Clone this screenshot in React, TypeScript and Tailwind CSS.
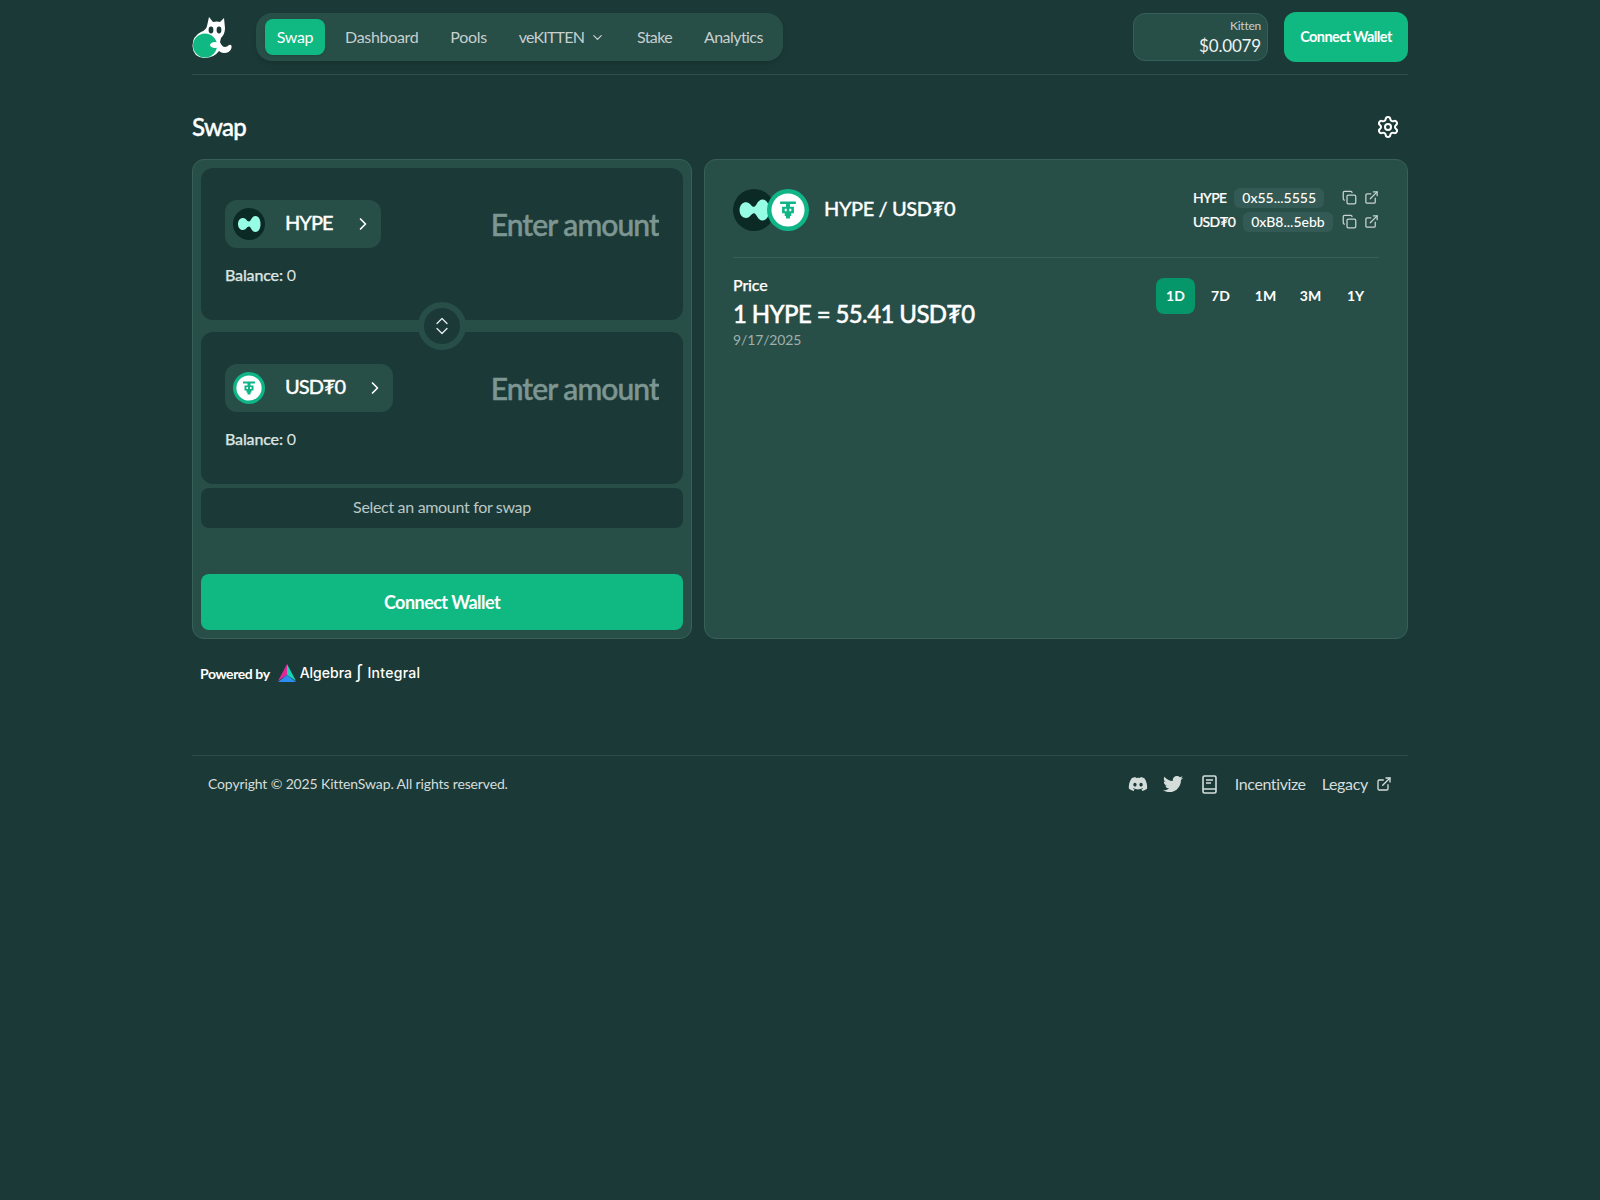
import { ChevronDown, ChevronRight, ChevronUp, Copy, ExternalLink, Settings } from 'lucide-react'
import { FaDiscord, FaTwitter } from 'react-icons/fa'

const navItems = [
  { label: 'Dashboard', className: 'tracking-[-0.02em]' },
  { label: 'Pools', className: 'tracking-[-0.02em]' },
  { label: 'veKITTEN', className: 'tracking-[-0.05em]' },
  { label: 'Stake', className: 'tracking-[-0.04em]' },
  { label: 'Analytics', className: 'tracking-[-0.035em]' }
]

function Logo() {
  return (
    <svg width="40" height="42" viewBox="0 0 40 42" aria-hidden>
      <path
        d="M15 10 L17 1 L21 6 Q25 5 28 6 L32 2 L33 12 Q33 18 29 22 L28 26 Q30 31 33 31 Q35 31 37 29 Q40 28 39.5 32 Q38 37 32 37 Q29 37 27 35 Q22 42 12 42 Q1 41 0.5 30 Q0.5 20 9 16 Q14 14 15 10Z"
        fill="#fff"
      />
      <circle cx="13" cy="29.5" r="12" fill="#10b981" />
      <ellipse cx="23" cy="29" rx="5" ry="3" fill="#fff" />
      <ellipse cx="19" cy="14" rx="2.4" ry="3.4" fill="#1b3a37" />
      <ellipse cx="27" cy="14" rx="2.4" ry="3.4" fill="#1b3a37" />
    </svg>
  )
}

function HypeIcon({ size = 32 }: { size?: number }) {
  return (
    <svg width={size} height={size} viewBox="0 0 32 32" aria-hidden>
      <circle cx="16" cy="16" r="16" fill="#0b2a25" />
      <path
        d="M5 16 C5 12 7.5 10 10 10 C13 10 14 13.5 16 13.5 C18 13.5 18.5 8 22.5 8 C26 8 27.5 12 27.5 16 C27.5 20 26 24 22.5 24 C18.5 24 18 18.5 16 18.5 C14 18.5 13 22 10 22 C7.5 22 5 20 5 16Z"
        fill="#97fce4"
      />
    </svg>
  )
}

function UsdIcon({ size = 32 }: { size?: number }) {
  return (
    <svg width={size} height={size} viewBox="0 0 32 32" aria-hidden>
      <circle cx="16" cy="16" r="16" fill="#0fb587" />
      <circle cx="16" cy="16" r="12.6" fill="#fff" />
      <path
        d="M10 9.5 H22 V11.5 H17.5 V13.5 H20.5 V18.5 H18.5 V20.5 H17.5 V22.5 H14.5 V20.5 H13.5 V18.5 H11.5 V13.5 H14.5 V11.5 H10Z M13.5 15 V17 H15 V15Z M17 15 V17 H18.5 V15Z"
        fill="#0fb587"
        fillRule="evenodd"
      />
    </svg>
  )
}

function TokenPanel({ symbol, icon }: { symbol: string; icon: React.ReactNode }) {
  return (
    <div className="h-[152px] rounded-xl bg-[#1b3a37] px-6 pt-8">
      <div className="flex items-center justify-between">
        <button className="flex h-12 items-center gap-5 rounded-xl bg-[#284e48] pl-2 pr-2 text-[20px] font-medium tracking-[-0.05em] text-white [-webkit-text-stroke:0.3px]">
          {icon}
          <span className="pb-1">{symbol}</span>
          <ChevronRight size={20} />
        </button>
        <input
          placeholder="Enter amount"
          className="w-[240px] bg-transparent text-right text-[30px] font-medium tracking-[-0.03em] outline-none [-webkit-text-stroke:0.5px] placeholder:text-[#7d9692]"
        />
      </div>
      <div className="mt-[15px] text-[16px] leading-6 tracking-[-0.01em] text-[#dbe3e1]">
        <span className="font-medium [-webkit-text-stroke:0.25px]">Balance:</span> 0
      </div>
    </div>
  )
}

function ContractRow({ label, address }: { label: string; address: string }) {
  return (
    <div className="flex h-5 items-center">
      <span className="text-[14px] font-medium tracking-[-0.05em] text-white [-webkit-text-stroke:0.2px]">{label}</span>
      <span className="ml-2 rounded-md bg-[#335a54] px-2 text-[14px] font-medium leading-5 text-white">{address}</span>
      <div className="ml-auto flex items-center gap-[7px] text-[#c9d3d1]">
        <Copy size={15} />
        <ExternalLink size={15} />
      </div>
    </div>
  )
}

export default function App() {
  return (
    <div className="min-h-screen bg-[#1b3a37] font-['Lato',sans-serif] text-white">
      <div className="mx-auto w-[1216px]">
        <header className="flex h-[75px] items-center justify-between border-b border-[#2c4f4a]">
          <div className="flex items-center gap-6">
            <Logo />
            <nav className="flex h-12 w-[527px] items-center rounded-2xl bg-[#284e48] pl-[9px] shadow-md">
              <a className="flex h-9 w-[60px] items-center justify-center rounded-lg bg-[#10b981] text-[16px] tracking-[-0.02em] text-white shadow">Swap</a>
              <div className="ml-5 flex items-center gap-8 text-[16px] text-[#c6d0ce]">
                {navItems.map(item => (
                  <a key={item.label} className={`flex items-center gap-1.5 ${item.className}`}>
                    {item.label}
                    {item.label === 'veKITTEN' && <ChevronDown size={15} />}
                  </a>
                ))}
              </div>
            </nav>
          </div>
          <div className="flex items-center gap-4">
            <div className="flex h-12 w-[135px] flex-col items-end justify-center rounded-xl border border-[#37605a] bg-[#284e48] pr-[6px] pt-[2px]">
              <span className="text-[12px] leading-4 tracking-[-0.02em] text-[#c6d0ce]">Kitten</span>
              <span className="text-[17px] leading-6 tracking-[-0.01em] text-[#eef3f2]">$0.0079</span>
            </div>
            <button className="h-[50px] w-[124px] rounded-xl bg-[#10b981] text-[14.5px] font-bold tracking-[-0.04em] text-white">Connect Wallet</button>
          </div>
        </header>

        <div className="flex h-[84px] items-center justify-between pt-5">
          <h1 className="text-[24px] font-medium tracking-[-0.03em] [-webkit-text-stroke:0.4px]">Swap</h1>
          <Settings size={24} className="mr-2" />
        </div>

        <main className="grid grid-cols-[500px_704px] gap-3">
          <section className="flex h-[480px] flex-col rounded-xl border border-[#37605a] bg-[#284e48] p-2">
            <div className="relative flex flex-col gap-3">
              <TokenPanel symbol="HYPE" icon={<HypeIcon />} />
              <TokenPanel symbol="USD₮0" icon={<UsdIcon />} />
              <div className="absolute left-1/2 top-[134px] flex size-12 -translate-x-1/2 flex-col items-center justify-center rounded-full border-[6px] border-[#284e48] bg-[#1b3a37] text-[#e4eae9]">
                <ChevronUp size={20} strokeWidth={1.6} className="-mb-[10px]" />
                <ChevronDown size={20} strokeWidth={1.6} />
              </div>
            </div>
            <div className="mt-1 flex h-10 items-center justify-center rounded-lg bg-[#1b3a37] pb-[2px] text-[16px] tracking-[-0.02em] text-[#bcc8c6]">Select an amount for swap</div>
            <button className="mt-auto h-14 rounded-lg bg-[#10b981] text-[18px] font-bold tracking-[-0.03em] text-white">Connect Wallet</button>
          </section>

          <section className="h-[480px] rounded-xl border border-[#37605a] bg-[#284e48] px-7">
            <div className="flex h-[98px] items-center justify-between border-b border-[#37605a] pt-[3px]">
              <div className="flex items-center">
                <HypeIcon size={42} />
                <div className="-ml-2">
                  <UsdIcon size={42} />
                </div>
                <span className="ml-[15px] pb-1 text-[20px] font-medium tracking-[-0.02em] [-webkit-text-stroke:0.3px]">HYPE / USD₮0</span>
              </div>
              <div className="flex w-[186px] flex-col gap-1 pb-px">
                <ContractRow label="HYPE" address="0x55...5555" />
                <ContractRow label="USD₮0" address="0xB8...5ebb" />
              </div>
            </div>
            <div className="flex justify-between pt-[15px]">
              <div>
                <div className="text-[16px] font-medium leading-6 tracking-[-0.01em] [-webkit-text-stroke:0.25px]">Price</div>
                <div className="mt-px text-[24px] font-medium leading-8 tracking-[-0.025em] [-webkit-text-stroke:0.4px]">1 HYPE = 55.41 USD₮0</div>
                <div className="text-[14px] leading-5 tracking-[-0.01em] text-[#9fb0ad]">9/17/2025</div>
              </div>
              <div className="mr-1 mt-[5px] flex items-start">
                {['1D', '7D', '1M', '3M', '1Y'].map(range => (
                  <button
                    key={range}
                    className={
                      range === '1D'
                        ? 'h-9 w-[39px] rounded-lg bg-[#059669] pb-px text-[14px] font-bold'
                        : 'ml-[6px] h-9 w-[39px] pb-px text-[14px] font-bold'
                    }
                  >
                    {range}
                  </button>
                ))}
              </div>
            </div>
          </section>
        </main>

        <div className="mt-6 flex h-5 items-center pl-2">
          <span className="text-[14px] font-bold tracking-[-0.03em]">Powered by</span>
          <svg width="18" height="18" viewBox="0 0 18 18" className="ml-2" aria-hidden>
            <path d="M9 0 L9 11 L0 17Z" fill="#e0289b" />
            <path d="M9 0 L18 17 L9 11Z" fill="#17d4b5" />
            <path d="M9 11 L18 18 H0Z" fill="#2a8ff0" />
          </svg>
          <span className="ml-1 pb-[2px] font-['Inter',sans-serif] text-[14px] font-medium">Algebra</span>
          <span className="ml-1 pb-[2px] font-['Inter',sans-serif] text-[18px] leading-none">∫</span>
          <span className="ml-[5px] pb-[2px] font-['Inter',sans-serif] text-[14px] font-medium tracking-[0.02em]">Integral</span>
        </div>

        <footer className="mt-[72px] flex h-[57px] items-center justify-between border-t border-[#2c4f4a] px-4 text-[#d5dddb]">
          <span className="pb-[2px] text-[14px] tracking-[-0.01em]">Copyright © 2025 KittenSwap. All rights reserved.</span>
          <div className="flex items-center">
            <FaDiscord size={20} />
            <FaTwitter size={20} className="ml-[15px]" />
            <svg width="15" height="19" viewBox="0 0 15 19" fill="none" stroke="currentColor" strokeWidth="1.6" className="ml-[19px]" aria-hidden>
              <rect x="1" y="1" width="13" height="17" rx="1.5" />
              <path d="M1 14 H14 M4 5 H11 M4 8 H9" />
            </svg>
            <a className="ml-[18px] text-[16px] tracking-[-0.025em]">Incentivize</a>
            <a className="ml-4 text-[16px] tracking-[-0.02em]">Legacy</a>
            <ExternalLink size={16} className="ml-2" />
          </div>
        </footer>
      </div>
    </div>
  )
}
